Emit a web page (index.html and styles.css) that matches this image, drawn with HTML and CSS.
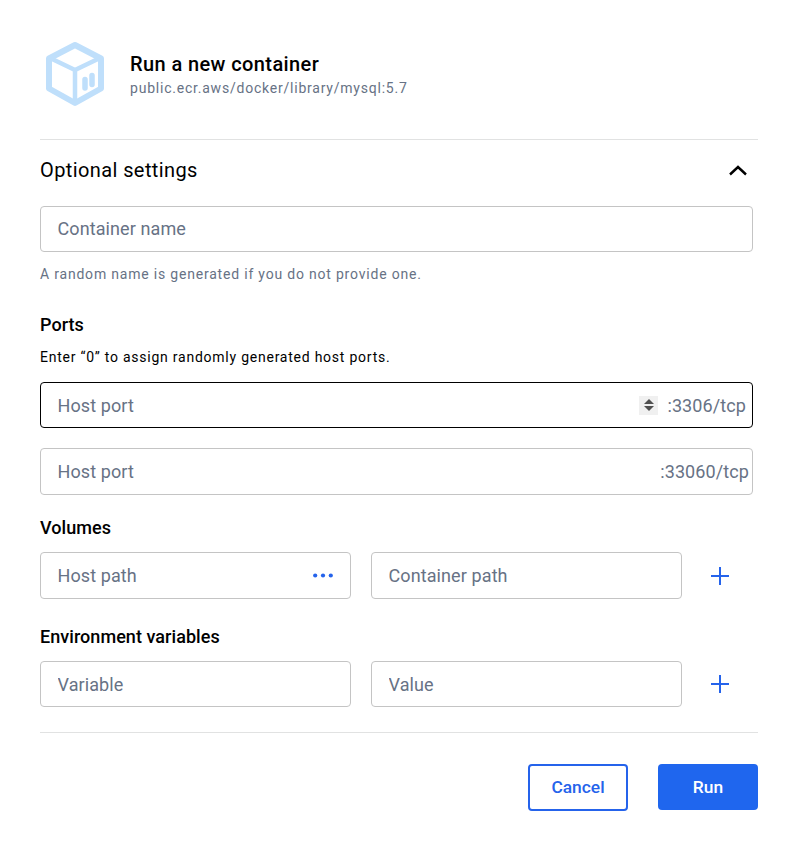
FILE: index.html
```
<!DOCTYPE html>
<html lang="en">
<head>
<meta charset="utf-8">
<title>Run a new container</title>
<link rel="stylesheet" href="styles.css">
</head>
<body>
<main class="dialog">
  <header class="head">
    <svg class="logo" width="62" height="66" viewBox="0 0 62 66" fill="none" stroke="#bfdffb" stroke-linejoin="round" stroke-linecap="round">
      <path d="M31 4 L57 17.5 V47.5 L31 62 L5 47.5 V17.5 Z" stroke-width="6"/>
      <path d="M6 17 L31 29 L56 17 M31 29 V61" stroke-width="4.5"/>
      <path d="M41 38.5 V47 M48 34.5 V43.5" stroke-width="5.5"/>
    </svg>
    <div class="head-text">
      <h1 class="title">Run a new container</h1>
      <p class="image">public.ecr.aws/docker/library/mysql:5.7</p>
    </div>
  </header>
  <hr class="rule">
  <div class="section-head">
    <h2 class="section-title">Optional settings</h2>
    <svg class="chevron" width="20" height="12" viewBox="0 0 20 12" fill="none" stroke="#000" stroke-width="2.4"><path d="M2 10.5 L10 3 L18 10.5"/></svg>
  </div>
  <div class="form">
    <div class="field"><input class="input name-input" placeholder="Container name" aria-label="Container name"></div>
    <p class="help">A random name is generated if you do not provide one.</p>

    <h3 class="label ports-label">Ports</h3>
    <p class="desc">Enter “0” to assign randomly generated host ports.</p>
    <div class="field focused">
      <input class="input" placeholder="Host port" aria-label="Host port">
      <span class="spin"><i class="up"></i><i class="down"></i></span>
      <span class="suffix">:3306/tcp</span>
    </div>
    <div class="field second tall">
      <input class="input" placeholder="Host port" aria-label="Host port">
      <span class="suffix tight">:33060/tcp</span>
    </div>

    <h3 class="label volumes-label">Volumes</h3>
    <div class="pair tall">
      <div class="field">
        <input class="input" placeholder="Host path" aria-label="Host path">
        <svg class="dots" width="20" height="5" viewBox="0 0 20 5" fill="#2563eb"><circle cx="2.2" cy="2.5" r="2.1"/><circle cx="10" cy="2.5" r="2.1"/><circle cx="17.8" cy="2.5" r="2.1"/></svg>
      </div>
      <div class="field"><input class="input" placeholder="Container path" aria-label="Container path"></div>
      <svg class="plus" width="18" height="18" viewBox="0 0 18 18" stroke="#2563eb" stroke-width="2"><path d="M0 9 H18 M9 0 V18"/></svg>
    </div>

    <h3 class="label env-label">Environment variables</h3>
    <div class="pair">
      <div class="field"><input class="input" placeholder="Variable" aria-label="Variable"></div>
      <div class="field"><input class="input" placeholder="Value" aria-label="Value"></div>
      <svg class="plus" width="18" height="18" viewBox="0 0 18 18" stroke="#2563eb" stroke-width="2"><path d="M0 9 H18 M9 0 V18"/></svg>
    </div>
  </div>
  <hr class="rule foot-rule">
  <footer class="actions">
    <button class="btn ghost">Cancel</button>
    <button class="btn primary">Run</button>
  </footer>
</main>
</body>
</html>
```
FILE: styles.css
```
* { box-sizing: border-box; }
html, body { margin: 0; background: #fff; }
body { font-family: Roboto, "Liberation Sans", sans-serif; color: #000; }
.dialog { width: 799px; height: 847px; padding: 41px 41px 0 40px; overflow: hidden; }
.head { display: flex; align-items: center; height: 66px; padding-left: 4px; gap: 24px; }
.logo { flex: none; }
.title { margin: 0; font-size: 20px; line-height: 24px; font-weight: 500; letter-spacing: 0.4px; }
.image { margin: 3px 0 0; font-size: 14px; line-height: 18px; color: #677285; letter-spacing: 0.78px; }
.rule { margin: 0; border: 0; border-top: 1px solid #e1e2e2; }
.head + .rule { margin-top: 32px; }
.section-head { display: flex; align-items: center; justify-content: space-between; height: 60px; margin-bottom: 6px; padding-right: 10px; }
.section-title { margin: 0; font-size: 20px; font-weight: 400; letter-spacing: 0.4px; }
.form { width: 713px; }
.field { display: flex; align-items: center; flex: 1; height: 46px; border: 1px solid #c4c4c4; border-radius: 4px; background: #fff; }
.field.focused { border-color: #000; }
.field.second { margin-top: 20px; }
.tall .field, .field.tall { height: 47px; }
.input { flex: 1; min-width: 0; height: 100%; border: 0; outline: 0; background: transparent; padding: 0 0 0 16.5px; font: 400 18px Roboto, sans-serif; letter-spacing: 0.1px; color: #000; }
.name-input { padding-bottom: 1px; }
.input::placeholder { color: #677285; opacity: 1; }
.help { margin: 13px 0 0; font-size: 14px; line-height: 18px; color: #677285; letter-spacing: 0.8px; }
.label { margin: 0; font-size: 18px; line-height: 20px; font-weight: 500; letter-spacing: 0.05px; }
.ports-label { margin-top: 32px; }
.volumes-label { margin-top: 23px; }
.env-label { margin-top: 28px; }
.desc { margin: 13px 0 16px; font-size: 14px; line-height: 18px; letter-spacing: 0.76px; }
.suffix { flex: none; padding-right: 6px; font-size: 18px; letter-spacing: 0.1px; color: #677285; }
.suffix.tight { padding-right: 3px; }
.spin { flex: none; display: flex; flex-direction: column; align-items: center; justify-content: center; gap: 2px; width: 19px; height: 19px; margin-right: 9px; background: #f0f0f0; }
.spin i { width: 0; height: 0; border-left: 5px solid transparent; border-right: 5px solid transparent; }
.spin .up { border-bottom: 5px solid #505050; }
.spin .down { border-top: 5px solid #505050; }
.pair { display: grid; grid-template-columns: 311px 311px 1fr; column-gap: 20px; align-items: center; margin-top: 14px; }
.dots { flex: none; margin-right: 17px; }
.plus { margin-left: 9px; }
.foot-rule { margin-top: 25px; }
.actions { display: flex; align-items: center; justify-content: flex-end; gap: 30px; height: 46px; margin-top: 31px; }
.btn { width: 100px; height: 46px; border-radius: 4px; font: 500 17.4px Roboto, sans-serif; }
.ghost { height: 47px; background: #fff; color: #2563eb; border: 2px solid #2563eb; }
.primary { background: #1f66ee; color: #fff; border: 0; }
```
